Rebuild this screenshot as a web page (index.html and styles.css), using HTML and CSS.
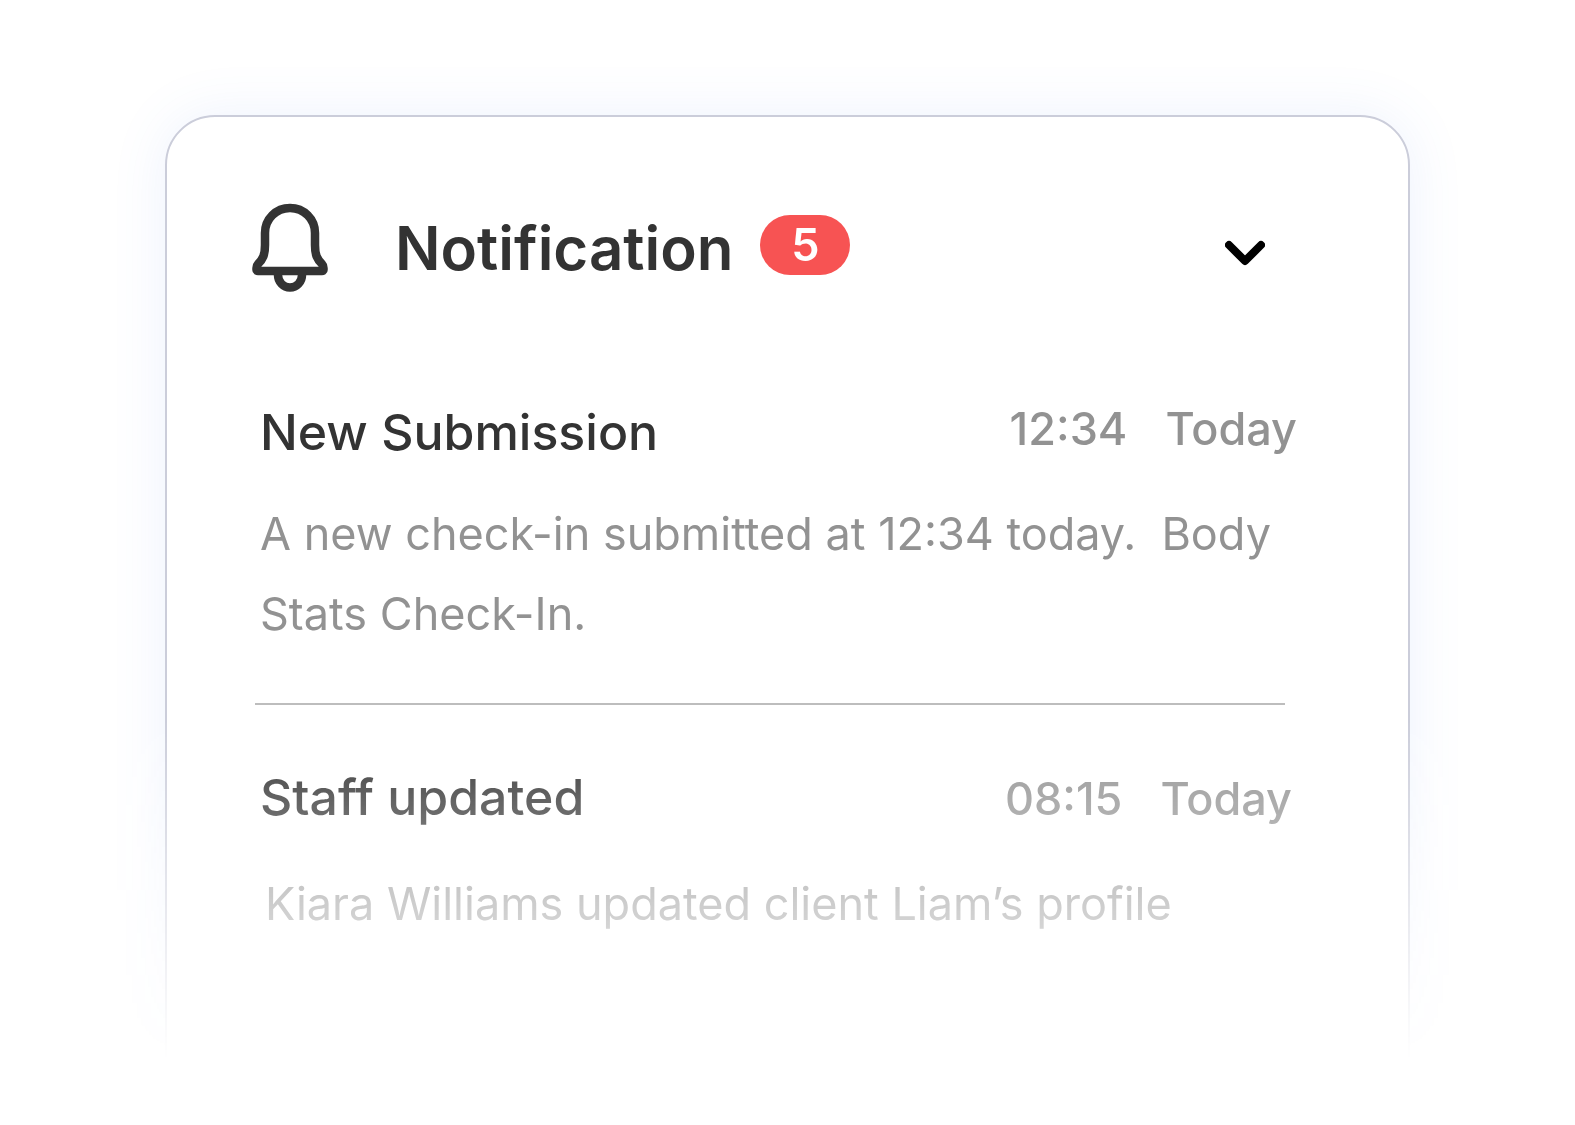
FILE: index.html
```html
<!DOCTYPE html>
<html lang="en">

<head>
    <meta charset="UTF-8">
    <meta name="viewport" content="width=device-width, initial-scale=1.0">
    <title>Notification</title>
    <link rel="stylesheet" href="styles.css">
</head>

<body>
    <main class="page">
        <section class="card">
            <header class="card-header">
                <svg class="bell" viewBox="0 3 80 94" fill="none" stroke="#333333" stroke-width="8.500" stroke-linecap="round" stroke-linejoin="round" aria-hidden="true">
                    <path d="M40 10C26 10 15 21 15 35V47C15 57 13 61 8 66Q6.500 67.500 6.500 70V72Q6.500 73 8 73H72Q73.500 73 73.500 72V70Q73.500 67.500 72 66C67 61 65 57 65 47V35C65 21 54 10 40 10Z" />
                    <path d="M28 75V77A12 12.500 0 0 0 52 77V75" />
                </svg>
                <h1>Notification</h1>
                <span class="badge">5</span>
                <button class="toggle" type="button" aria-label="Collapse notifications">
                    <svg viewBox="0 0 40 40" fill="none" stroke="#000000" stroke-width="8" stroke-linecap="round" stroke-linejoin="round" aria-hidden="true">
                        <path d="M4 14L20 30L36 14" />
                    </svg>
                </button>
            </header>

            <article class="notice">
                <div class="notice-head">
                    <h2>New Submission</h2>
                    <div class="notice-time">
                        <span>12:34</span>
                        <span>Today</span>
                    </div>
                </div>
                <p>A new check-in submitted at 12:34 today.&nbsp; Body Stats Check-In.</p>
            </article>

            <hr>

            <article class="notice notice-last">
                <div class="notice-head">
                    <h2>Staff updated</h2>
                    <div class="notice-time">
                        <span>08:15</span>
                        <span>Today</span>
                    </div>
                </div>
                <p>Kiara Williams updated client Liam’s profile</p>
            </article>
        </section>
    </main>
</body>

</html>
```

FILE: styles.css
```css
* {
    box-sizing: border-box;
}

body {
    margin: 0;
    background-color: #ffffff;
    font-family: "Inter", sans-serif;
    color: #333333;
}

/* the whole card, shadow included, fades out towards the bottom */
.page {
    padding: 115px 165px 35px;
    -webkit-mask-image: linear-gradient(to bottom, #000 720px, transparent 1060px);
    mask-image: linear-gradient(to bottom, #000 720px, transparent 1060px);
}

.card {
    padding: 84px 108px 129px 83px;
    border: 2px solid #cbcdda;
    border-radius: 50px 50px 0 0;
    background-color: #ffffff;
    box-shadow: 0 0 56px rgba(80, 130, 240, 0.1);
}

h1,
h2,
p {
    margin: 0;
}

.card-header {
    display: flex;
    align-items: center;
    padding-right: 35px;
    margin-bottom: 107px;
}

.bell {
    width: 80px;
    height: 94px;
    margin-right: 65px;
}

h1 {
    font-size: 60px;
    line-height: 72px;
    font-weight: 600;
}

.badge {
    width: 90px;
    margin: 0 0 6px 27px;
    border-radius: 30px;
    background-color: #f75353;
    color: #ffffff;
    font-size: 45px;
    line-height: 60px;
    font-weight: 600;
    text-align: center;
}

.toggle {
    margin-left: auto;
    padding: 6px 0 0;
    border: none;
    background: none;
    cursor: pointer;
}

.toggle svg {
    display: block;
    width: 40px;
    height: 40px;
}

.notice {
    padding: 0 3px 0 10px;
}

.notice-head {
    display: flex;
    justify-content: space-between;
    align-items: flex-start;
    margin-bottom: 32px;
}

h2 {
    font-size: 50px;
    line-height: 60px;
    font-weight: 500;
}

.notice-time {
    display: flex;
    gap: 38px;
    color: #929292;
    font-size: 45px;
    line-height: 54px;
    font-weight: 500;
}

.notice p {
    color: #929292;
    font-size: 45px;
    line-height: 80px;
}

hr {
    height: 2px;
    margin: 49px 15px 62px 5px;
    border: none;
    background-color: #bdbdbd;
}

.notice-last .notice-head {
    align-items: baseline;
    padding-right: 5px;
    margin-bottom: 37px;
}

.notice-last p {
    padding-left: 5px;
}
```
